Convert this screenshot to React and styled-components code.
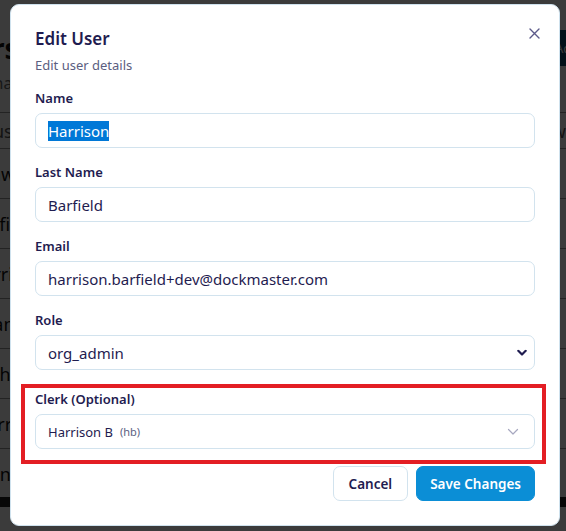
import React, { useEffect, useRef } from 'react';
import styled, { createGlobalStyle } from 'styled-components';

const navy = '#1f1c50';
const muted = '#5b5e80';
const fieldBorder = '#d2e3ee';
const blue = '#0b8ed6';

const GlobalStyle = createGlobalStyle`
	* { box-sizing: border-box; }
	html, body {
		margin: 0;
		padding: 0;
		width: 566px;
		height: 531px;
		overflow: hidden;
		font-family: "Segoe UI", "Noto Sans", Arial, sans-serif;
	}
	::selection {
		background: #0078d7;
		color: #ffffff;
	}
`;

const rows = ['Shawn', 'Barfield', 'Harris', 'Dean', 'Michel', 'Morris', 'Quinn'];

export default function App() {
	const nameRef = useRef(null);

	useEffect(() => {
		if (nameRef.current) {
			nameRef.current.focus();
			nameRef.current.select();
		}
	}, []);

	return (
		<>
			<GlobalStyle />
			<Page aria-hidden="true">
				<PageHeader>
					<PageTitle>Users</PageTitle>
					<PageAction>Add</PageAction>
				</PageHeader>
				<PageSub>Manage</PageSub>
				<Table>
					<HeadRow>
						<span>Status</span>
						<span>View</span>
					</HeadRow>
					{rows.map((r) => (
						<Row key={r}>
							<span>{r}</span>
						</Row>
					))}
				</Table>
				<ScrollBar />
			</Page>
			<Backdrop />

			<Modal role="dialog" aria-labelledby="edit-user-title">
				<CloseButton aria-label="Close">
					<svg width="11" height="11" viewBox="0 0 11 11">
						<path d="M1 1 L10 10 M10 1 L1 10" stroke="#5c5a8a" strokeWidth="1.4" strokeLinecap="round" />
					</svg>
				</CloseButton>

				<Title id="edit-user-title">Edit User</Title>
				<Subtitle>Edit user details</Subtitle>

				<Field>
					<Label htmlFor="name">Name</Label>
					<Input id="name" ref={nameRef} defaultValue="Harrison" />
				</Field>
				<Field>
					<Label htmlFor="last">Last Name</Label>
					<Input id="last" defaultValue="Barfield" />
				</Field>
				<Field>
					<Label htmlFor="email">Email</Label>
					<Input id="email" defaultValue="harrison.barfield+dev@dockmaster.com" />
				</Field>
				<Field>
					<Label htmlFor="role">Role</Label>
					<SelectWrap>
						<Select id="role" defaultValue="org_admin">
							<option value="org_admin">org_admin</option>
							<option value="user">user</option>
						</Select>
						<Chevron width="10" height="7" viewBox="0 0 10 7" $right={8}>
							<path d="M1.3 1.3 L5 5 L8.7 1.3" fill="none" stroke={navy} strokeWidth="2.2" strokeLinecap="round" strokeLinejoin="round" />
						</Chevron>
					</SelectWrap>
				</Field>

				<Highlight>
					<Label>Clerk (Optional)</Label>
					<Combo>
						<span>Harrison B</span>
						<Initials>(hb)</Initials>
						<Chevron width="12" height="8" viewBox="0 0 12 8" $right={15}>
							<path d="M1.5 1.5 L6 6 L10.5 1.5" fill="none" stroke="#a7a8c0" strokeWidth="1.2" strokeLinecap="round" strokeLinejoin="round" />
						</Chevron>
					</Combo>
				</Highlight>

				<Actions>
					<Button>Cancel</Button>
					<Button $primary>Save Changes</Button>
				</Actions>
			</Modal>
		</>
	);
}

const Page = styled.div`
	position: fixed;
	inset: 0;
	overflow: hidden;
	background: #ffffff;
	padding-top: 30px;
	font-family: "Segoe UI", "Noto Sans", Arial, sans-serif;
	color: #111;
`;

const PageHeader = styled.div`
	display: flex;
	justify-content: space-between;
	align-items: center;
	height: 36px;
	margin-left: -60px;
`;

const PageTitle = styled.h1`
	margin: 0;
	font-size: 28px;
	font-weight: 700;
`;

const PageAction = styled.div`
	background: #0c4a6e;
	color: #fff;
	height: 36px;
	width: 14px;
	padding-left: 3px;
	display: flex;
	align-items: center;
	overflow: hidden;
	font-size: 13px;
`;

const PageSub = styled.div`
	font-size: 16px;
	color: #666;
	margin-top: 6px;
	height: 40px;
	margin-left: -30px;
`;

const Table = styled.div`
	border-top: 1px solid #999;
`;

const HeadRow = styled.div`
	display: flex;
	justify-content: space-between;
	height: 36px;
	align-items: center;
	font-size: 18px;
	color: #555;
	border-bottom: 1px solid #999;
	margin-left: -40px;
`;

const Row = styled.div`
	height: 50px;
	display: flex;
	align-items: center;
	font-size: 18px;
	border-bottom: 1px solid #999;
	margin-left: -30px;
`;

const ScrollBar = styled.div`
	height: 10px;
	background: #222;
	margin-top: -2px;
`;

const Backdrop = styled.div`
	position: fixed;
	inset: 0;
	background: rgba(0, 0, 0, 0.77);
`;

const Modal = styled.div`
	position: fixed;
	left: 10px;
	top: 4px;
	width: 550px;
	height: 522px;
	background: #ffffff;
	border: 1px solid #cfe2ee;
	border-radius: 9px;
	padding: 22px 24px 0 24px;
	display: flex;
	flex-direction: column;
	color: ${navy};
`;

const CloseButton = styled.button`
	position: absolute;
	top: 21px;
	right: 18px;
	width: 14px;
	height: 14px;
	padding: 0;
	border: none;
	background: none;
	display: flex;
	align-items: center;
	justify-content: center;
	cursor: pointer;
`;

const Title = styled.h2`
	margin: 0;
	font-size: 17px;
	line-height: 24px;
	font-weight: 600;
	color: ${navy};
`;

const Subtitle = styled.p`
	margin: 5px 0 15px;
	font-size: 13px;
	line-height: 18px;
	color: ${muted};
`;

const Field = styled.div`
	display: flex;
	flex-direction: column;
	margin-bottom: 15px;
`;

const Label = styled.label`
	font-size: 13px;
	line-height: 18px;
	font-weight: 600;
	color: ${navy};
	margin-bottom: 6px;
`;

const Input = styled.input`
	height: 35px;
	width: 100%;
	border: 1.5px solid ${fieldBorder};
	border-radius: 7px;
	padding: 0 12px;
	font-family: inherit;
	font-size: 15px;
	color: ${navy};
	background: #fff;
	outline: none;
`;

const SelectWrap = styled.div`
	position: relative;
`;

const Select = styled.select`
	appearance: none;
	height: 35px;
	width: 100%;
	border: 1.5px solid ${fieldBorder};
	border-radius: 7px;
	padding: 0 12px;
	font-family: inherit;
	font-size: 15px;
	color: ${navy};
	background: #fff;
	outline: none;
`;

const Chevron = styled.svg`
	position: absolute;
	right: ${(p) => p.$right}px;
	top: 50%;
	transform: translateY(-50%);
	pointer-events: none;
`;

const Highlight = styled.div`
	display: flex;
	flex-direction: column;
	margin: -1px -11px 0 -14px;
	border: 4px solid #e31e24;
	padding: 2px 7px 11px 10px;
`;

const Combo = styled.div`
	position: relative;
	height: 35px;
	display: flex;
	align-items: center;
	gap: 7px;
	border: 1.5px solid ${fieldBorder};
	border-radius: 7px;
	padding: 0 12px;
	font-size: 13px;
	color: ${navy};
`;

const Initials = styled.span`
	font-size: 11px;
	color: #5b5e80;
`;

const Actions = styled.div`
	display: flex;
	justify-content: flex-end;
	gap: 8px;
	margin-top: 2px;
`;

const Button = styled.button`
	height: 35px;
	padding: 0 ${(p) => (p.$primary ? 13 : 15)}px;
	border-radius: 7px;
	font-family: inherit;
	font-size: 13.5px;
	font-weight: 600;
	cursor: pointer;
	border: 1px solid ${(p) => (p.$primary ? blue : fieldBorder)};
	background: ${(p) => (p.$primary ? blue : '#fff')};
	color: ${(p) => (p.$primary ? '#fff' : navy)};
`;
